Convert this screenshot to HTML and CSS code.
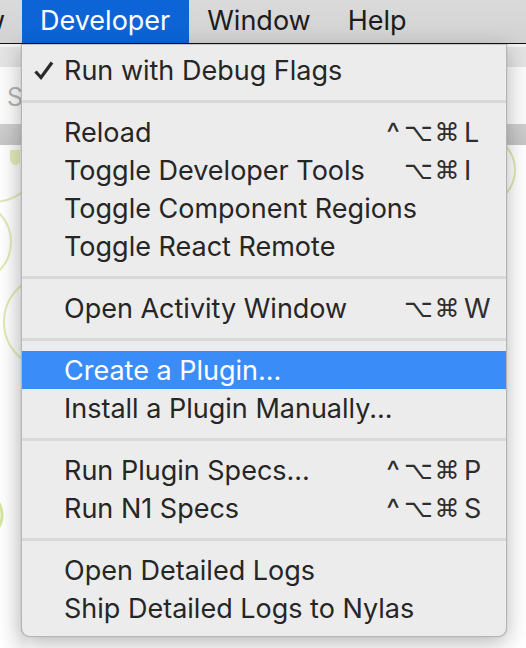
FILE: index.html
```html
<!DOCTYPE html>
<html>
<head>
<meta charset="utf-8">
<link rel="stylesheet" href="styles.css">
</head>
<body>
<div class="menubar">
  <div class="mb-clip"><span class="mb-item">View</span></div>
  <span class="mb-item active">Developer</span>
  <span class="mb-item">Window</span>
  <span class="mb-item">Help</span>
</div>
<div class="window">
  <div class="band-top"></div>
  <div class="search-area"><span class="search-text">Search</span></div>
  <div class="band-mid"></div>
  <div class="canvas">
    <svg class="circles" width="526" height="503" viewBox="0 145 526 503">
      <circle cx="-8" cy="150" r="52" fill="none" stroke="#dfe8b2" stroke-width="2"/>
      <path d="M10 150 h10 v12 a6 6 0 0 1 -6 3 a8 8 0 0 1 -4 -8z" fill="#e2eab8"/>
      <circle cx="-30" cy="242" r="41" fill="none" stroke="#dfe8b2" stroke-width="2"/>
      <circle cx="51" cy="322" r="47" fill="none" stroke="#dfe8b2" stroke-width="2"/>
      <circle cx="-22" cy="515" r="24" fill="none" stroke="#d5e4a0" stroke-width="3"/>
      <circle cx="480" cy="170" r="35" fill="none" stroke="#dfe8b2" stroke-width="2"/>
    </svg>
  </div>
</div>

<div class="menu">
  <div class="row">
    <span class="check"><svg width="20" height="19" viewBox="0 0 20 19"><path d="M1.5 10.5 L7 16.5 L18 1.5" fill="none" stroke="#2b2b2b" stroke-width="3.2" stroke-linecap="butt" stroke-linejoin="miter"/></svg></span>
    <span class="label">Run with Debug Flags</span>
  </div>
  <div class="sep"></div>
  <div class="row"><span class="label">Reload</span>
    <span class="sc"><span class="m caret">^</span><span class="m">⌥</span><span class="m">⌘</span><span class="k">L</span></span></div>
  <div class="row"><span class="label">Toggle Developer Tools</span>
    <span class="sc"><span class="m"></span><span class="m">⌥</span><span class="m">⌘</span><span class="k">I</span></span></div>
  <div class="row"><span class="label">Toggle Component Regions</span></div>
  <div class="row"><span class="label">Toggle React Remote</span></div>
  <div class="sep"></div>
  <div class="row"><span class="label">Open Activity Window</span>
    <span class="sc"><span class="m"></span><span class="m">⌥</span><span class="m">⌘</span><span class="k">W</span></span></div>
  <div class="sep"></div>
  <div class="row hl"><span class="label">Create a Plugin...</span></div>
  <div class="row"><span class="label">Install a Plugin Manually...</span></div>
  <div class="sep"></div>
  <div class="row"><span class="label">Run Plugin Specs...</span>
    <span class="sc"><span class="m caret">^</span><span class="m">⌥</span><span class="m">⌘</span><span class="k">P</span></span></div>
  <div class="row"><span class="label">Run N1 Specs</span>
    <span class="sc"><span class="m caret">^</span><span class="m">⌥</span><span class="m">⌘</span><span class="k">S</span></span></div>
  <div class="sep"></div>
  <div class="row"><span class="label">Open Detailed Logs</span></div>
  <div class="row"><span class="label">Ship Detailed Logs to Nylas</span></div>
</div>
</body>
</html>
```

FILE: styles.css
```css
html, body {
  margin: 0;
  padding: 0;
}
body {
  width: 526px;
  height: 648px;
  overflow: hidden;
  position: relative;
  background: #ffffff;
  font-family: "Inter", "Roboto", "Noto Sans", sans-serif;
}
.menubar {
  height: 43px;
  border-bottom: 1px solid #111;
  background: linear-gradient(#dadada, #d2d2d2);
  display: flex;
  align-items: stretch;
  font-size: 27px;
  color: #1c1c1c;
}
.mb-clip {
  width: 22px;
  overflow: hidden;
  display: flex;
  justify-content: flex-end;
}
.mb-item {
  display: flex;
  align-items: center;
  padding: 0 19px 2px 18px;
  white-space: nowrap;
}
.mb-clip .mb-item {
  padding-right: 17px;
  padding-left: 0;
}
.mb-item.active {
  background: #0c64d6;
  color: #ffffff;
}
.window {
  display: flex;
  flex-direction: column;
}
.band-top {
  height: 3px;
  background: #f2f2f2;
}
.search-area {
  border-top: 20px solid #e3e3e3;
  background: #fbfbfb;
  box-sizing: border-box;
  height: 77px;
  padding: 15px 0 0 7px;
}
.search-text {
  font-size: 25px;
  color: #b3b3b3;
}
.band-mid {
  height: 21px;
  background: linear-gradient(#cfcfcf, #c5c5c5);
}
.canvas {
  height: 503px;
  background: linear-gradient(90deg, #ffffff 0px, #f6f6f6 22px, #ffffff 30px);
}
.circles {
  display: block;
}
.menu {
  position: absolute;
  left: 21px;
  top: 44px;
  width: 484px;
  height: 585px;
  background: #ececec;
  border: 1px solid #b5b5b5;
  border-top: 1px solid #c4c4c4;
  border-radius: 0 0 9px 9px;
  box-shadow: 0 6px 22px rgba(0, 0, 0, 0.28), 0 0 1px rgba(0,0,0,0.3);
  padding-top: 6px;
  display: flex;
  flex-direction: column;
}
.row {
  height: 38px;
  flex: none;
  display: flex;
  align-items: center;
  padding-left: 42px;
  box-sizing: border-box;
  font-size: 27px;
  color: #262626;
  position: relative;
  white-space: nowrap;
}
.row.hl {
  background: #3a8df8;
  color: #ffffff;
}
.check {
  position: absolute;
  left: 12px;
  top: 10px;
  width: 20px;
  height: 19px;
}
.check svg {
  display: block;
}
.label {
  flex: 1;
}
.sc {
  display: grid;
  grid-template-columns: 22px 28px 30px 44px;
  align-items: center;
  font-family: "DejaVu Sans", sans-serif;
  color: #2e2e2e;
  font-size: 25px;
}
.m {
  text-align: center;
}
.m.caret {
  font-family: "Inter", "Roboto", sans-serif;
  font-size: 29px;
}
.k {
  font-family: "Inter", "Roboto", sans-serif;
  font-size: 27px;
  text-align: left;
  padding-left: 2px;
}
.sep {
  height: 24px;
  flex: none;
  display: flex;
  align-items: center;
}
.sep::before {
  content: "";
  display: block;
  width: 100%;
  height: 3px;
  background: #d9d9d9;
}
```
